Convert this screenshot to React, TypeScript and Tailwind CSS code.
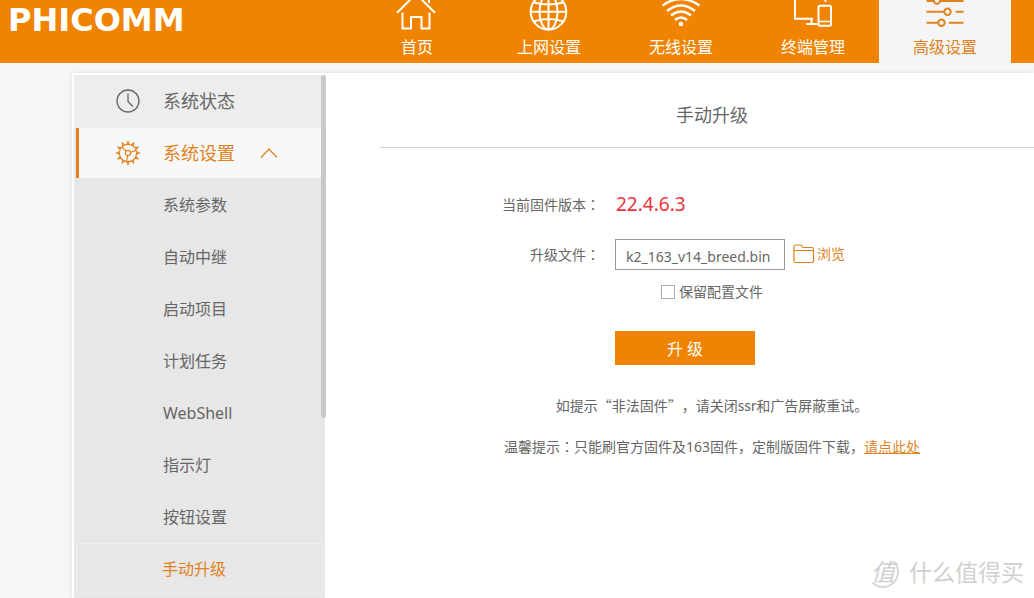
import type { ReactNode } from "react";

type NavItem = { label: string; icon: ReactNode; active?: boolean };

const iconProps = {
  width: 48,
  height: 36,
  viewBox: "0 0 48 36",
  fill: "none",
  stroke: "currentColor",
  strokeWidth: 2,
  "aria-hidden": true,
} as const;

const HomeIcon = () => (
  <svg {...iconProps}>
    <path d="M4 12.800 23-6 42 12.800M36 3v-8M9.500 12.500V28.500H18V17h10.500v11.500h8V12.500" />
  </svg>
);

const GlobeIcon = () => (
  <svg {...iconProps}>
    <circle cx="23.500" cy="11.800" r="17.800" />
    <ellipse cx="23.500" cy="11.800" rx="9" ry="17.800" />
    <path d="M23.500-6v36M5.700 11.800h35.600M8.500 2.500q15 4 30 0M8.500 21.500q15-5 30 0" />
  </svg>
);

const WifiIcon = () => (
  <svg {...iconProps} strokeWidth={2.4}>
    <circle cx="24" cy="24" r="2.300" fill="currentColor" stroke="none" />
    <path d="M5.500 5.500q18.500-13 37 0M10 11q14-11 28 0M14 15.500q10-8 20 0M18 20q6-5 12 0" />
  </svg>
);

const DevicesIcon = () => (
  <svg {...iconProps}>
    <path d="M6-6v24.800h18M17 24h11M22.500 19v5M36.500 2v-8" />
    <rect x="29.500" y="5.800" width="12.500" height="20" rx="1.500" />
    <path d="M30 21.500h12" strokeWidth="1.500" />
  </svg>
);

const SlidersIcon = () => (
  <svg {...iconProps}>
    <circle cx="16" cy="0.500" r="3.200" />
    <circle cx="26.500" cy="11.800" r="3.200" />
    <circle cx="20.500" cy="22.800" r="3.200" />
    <path d="M5.500 1h7.500M19.500 1h23M5.500 11.800h17.500M34.500 11.800h8M5.500 22.800h11.500M28 22.800h14.500" />
  </svg>
);

const navItems: NavItem[] = [
  { label: "首页", icon: <HomeIcon /> },
  { label: "上网设置", icon: <GlobeIcon /> },
  { label: "无线设置", icon: <WifiIcon /> },
  { label: "终端管理", icon: <DevicesIcon /> },
  { label: "高级设置", icon: <SlidersIcon />, active: true },
];

const subItems = ["系统参数", "自动中继", "启动项目", "计划任务", "WebShell", "指示灯", "按钮设置"];

const ClockIcon = () => (
  <svg width="26" height="26" viewBox="0 0 26 26" fill="none" stroke="currentColor" strokeWidth="1.300" aria-hidden>
    <circle cx="13" cy="13" r="11" />
    <path d="M13 5.500v8l4.800 5" />
  </svg>
);

const GearIcon = () => (
  <svg width="26" height="26" viewBox="0 0 26 26" fill="none" stroke="currentColor" strokeWidth="1.100" aria-hidden>
    <circle cx="13" cy="13" r="8.600" />
    <circle cx="13" cy="13" r="2.600" />
    {Array.from({ length: 12 }, (_, i) => (
      <path key={i} d="M11.800 4.400 13 1.500l1.200 2.900" transform={`rotate(${i * 30} 13 13)`} />
    ))}
    <path d="M11 11.200 7 7M15.600 12.200l5.800-1.800M12.600 15.600l-1 6" />
  </svg>
);

const FolderIcon = () => (
  <svg width="22" height="20" viewBox="0 0 22 20" fill="none" stroke="currentColor" strokeWidth="1.200" aria-hidden>
    <path d="M1 17V2.500Q1 1 2.500 1H8l2 2.500h9q1.500 0 1.500 1.500v12q0 1.500-1.500 1.500H2.500Q1 18.500 1 17ZM1 6.500h19.500" />
  </svg>
);

const Colon = () => <span className="font-['Noto_Sans_CJK_TC',sans-serif] [text-spacing-trim:space-all]" lang="zh-TW">：</span>;

function Header() {
  return (
    <header className="flex h-[63px] shrink-0 overflow-hidden bg-[#f08300] text-white">
      <a href="#home" className="w-[351px] shrink-0 pl-2 pt-1 font-['DejaVu_Sans',sans-serif] text-[32px] leading-8 font-bold">
        PHICOMM
      </a>
      <nav className="flex">
        {navItems.map((item) => (
          <a
            key={item.label}
            href="#nav"
            className={
              item.active
                ? "flex w-[132px] shrink-0 flex-col items-center bg-[#f5f5f5] text-[#e0821e]"
                : "flex w-[132px] shrink-0 flex-col items-center"
            }
          >
            {item.icon}
            <span className="text-base leading-[22px]">{item.label}</span>
          </a>
        ))}
      </nav>
    </header>
  );
}

function Sidebar() {
  return (
    <aside className="relative w-[251px] shrink-0 bg-[#e7e7e7]">
      <a href="#status" className="flex h-[53px] items-center gap-[22px] bg-[#ededed] pb-0.5 pl-[41px] text-lg">
        <ClockIcon />
        系统状态
      </a>
      <div className="pl-0.5">
        <button
          type="button"
          aria-expanded="true"
          className="flex h-[50px] w-full items-center gap-[22px] border-l-3 border-[#e0821e] bg-[#f8f8f8] pl-9 text-lg text-[#e0821e]"
        >
          <GearIcon />
          系统设置
          <svg width="24" height="12" viewBox="0 0 24 12" fill="none" stroke="currentColor" strokeWidth="1.200" aria-hidden>
            <path d="M4 10.500 12 2l8 8.500" />
          </svg>
        </button>
      </div>
      <ul className="pt-px text-base">
        {subItems.map((label) => (
          <li key={label}>
            <a href="#item" className="flex h-[52px] items-center pl-[89px]">
              {label}
            </a>
          </li>
        ))}
        <li className="px-0.5">
          <a href="#upgrade" aria-current="page" className="flex h-[51px] items-center border border-[#f0f0f0] pl-[85px] text-[#e0821e]">
            手动升级
          </a>
        </li>
      </ul>
      <div className="absolute top-0 -right-px h-[343px] w-[5px] rounded-full bg-[#c9c9c9]" />
    </aside>
  );
}

function UpgradePage() {
  return (
    <main className="-mr-2.5 ml-[55px] min-w-0 grow text-sm">
      <h1 className="flex h-[73px] items-center justify-center border-b border-[#cfcfcf] pt-2 text-lg">手动升级</h1>
      <form className="pl-[122px]" onSubmit={(e) => e.preventDefault()}>
        <div className="mt-10 flex h-8 items-center">
          <span className="w-[98px] shrink-0 text-right">
            当前固件版本
            <Colon />
          </span>
          <output className="ml-4 pt-0.5 text-[19px] text-[#e8323c]">22.4.6.3</output>
        </div>
        <div className="mt-[19px] flex h-[31px] items-center">
          <label htmlFor="file" className="w-[98px] shrink-0 text-right">
            升级文件
            <Colon />
          </label>
          <input
            id="file"
            type="text"
            defaultValue="k2_163_v14_breed.bin"
            className="ml-[15px] h-[31px] w-[170px] border border-[#999] pt-1 pl-2.5 text-sm outline-none"
          />
          <button type="button" className="ml-2 flex items-center gap-0.5 pb-0.5 whitespace-nowrap text-[#e0821e]">
            <FolderIcon />
            浏览
          </button>
        </div>
        <div className="mt-3 flex h-5 items-center gap-1 pl-[159px]">
          <input
            id="keep"
            type="checkbox"
            className="size-3.5 appearance-none border border-[#aaa] bg-white checked:bg-[#f08300]"
          />
          <label htmlFor="keep">保留配置文件</label>
        </div>
        <button type="submit" className="mt-[29px] ml-[113px] block h-[34px] w-[140px] bg-[#f08300] pt-0.5 text-base text-white">
          升 级
        </button>
      </form>
      <p className="mt-[30px] text-center font-['Noto_Sans_CJK_SC',sans-serif] leading-5 [text-spacing-trim:space-all]">
        如提示“非法固件”，请关闭ssr和广告屏蔽重试。
      </p>
      <p className="mt-[21px] text-center leading-5">
        温馨提示
        <Colon />
        只能刷官方固件及163固件，定制版固件下载，
        <a href="#download" className="text-[#e0821e] underline">
          请点此处
        </a>
      </p>
    </main>
  );
}

function Watermark() {
  return (
    <div className="absolute right-2.5 bottom-2 flex items-center gap-2.5 text-[#d0d0d0]">
      <span className="flex size-8 items-center justify-center rounded-full border-2 border-transparent border-r-[#d8d8d8] border-b-[#d8d8d8] text-2xl italic">
        值
      </span>
      <span className="text-[23px] leading-9">什么值得买</span>
    </div>
  );
}

export default function App() {
  return (
    <div
      lang="zh-CN"
      className="relative flex min-h-screen flex-col overflow-hidden bg-[#f7f7f7] font-['Noto_Sans','Noto_Sans_CJK_SC',sans-serif] text-[#666]"
    >
      <Header />
      <div className="mt-2.5 ml-[72px] flex grow bg-white pt-0.5 pl-0.5 shadow-[0_0_6px_rgba(0,0,0,0.1)]">
        <Sidebar />
        <UpgradePage />
      </div>
      <Watermark />
    </div>
  );
}
